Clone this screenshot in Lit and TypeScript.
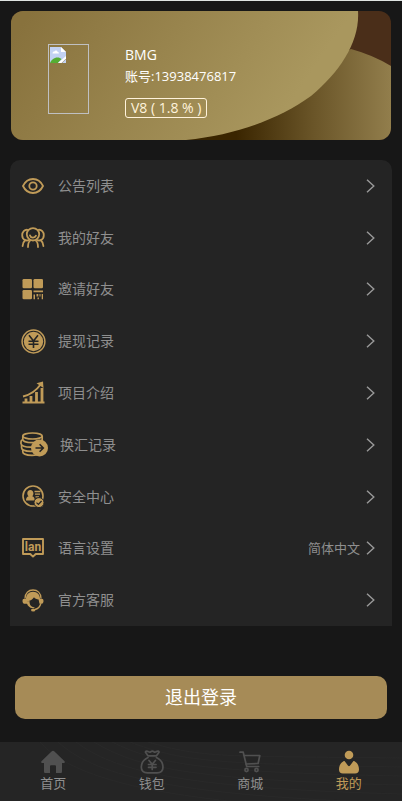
import { LitElement, html, css, svg, TemplateResult } from "lit";
import { customElement } from "lit/decorators.js";
import { classMap } from "lit/directives/class-map.js";

interface MenuEntry {
  label: string;
  icon: TemplateResult;
  value?: string;
}

interface TabEntry {
  label: string;
  icon: TemplateResult;
  active?: boolean;
}

const eyeIcon = html`<svg width="22" height="16" viewBox="0 0 22 16" fill="none" stroke="currentColor" stroke-width="1.8">
  <path d="M1 8C3.200 3.400 6.800 1 11 1s7.800 2.400 10 7c-2.200 4.600-5.800 7-10 7S3.200 12.600 1 8z" />
  <circle cx="11" cy="8" r="3.700" />
</svg>`;

const friendsIcon = html`<svg width="24" height="21" viewBox="0 0 24 21" fill="none" stroke="currentColor" stroke-width="1.8" stroke-linecap="round">
  <circle cx="12" cy="7.300" r="6.200" />
  <path d="M9 8.500c.6 2.600 4.800 2.900 6 .2" />
  <path d="M6.500 2.800C3.500 2.500 1.200 5 1.200 8.200c0 2.300 1.200 4.200 3 5C2.500 14.600 1.700 16.500 1.600 19" />
  <path d="M17.500 2.800c3-.3 5.300 2.200 5.300 5.400 0 2.300-1.200 4.200-3 5 1.700 1.400 2.500 3.300 2.600 5.800" />
  <path d="M4.200 13.200c1.200.4 2.600.4 3.800-.2M19.800 13.200c-1.200.4-2.600.4-3.800-.2" />
  <path d="M9.200 13.600C7.600 14.800 7 17 7 20M14.800 13.600c1.600 1.200 2.200 3.400 2.200 6.400" />
</svg>`;

const codeIcon = html`<svg width="22" height="21" viewBox="0 0 22 21" fill="currentColor">
  <rect x="0.500" y="0" width="9.500" height="9.300" rx="1.300" />
  <rect x="11.500" y="0" width="9.500" height="9.300" rx="1.300" />
  <rect x="0.500" y="11" width="9.500" height="9.300" rx="1.300" />
  <path d="M11.500 11.500H21v1.700h-9.500zM11.500 15.500h1.500v4.800h-1.500zM14.500 15h1.800v2.500h-1.800zM15.500 18.500h1.400v1.800h-1.400zM17.500 15h1v2.500h-1zM19.700 15H21v5.300h-1.300z" />
</svg>`;

const yenIcon = html`<svg width="25" height="25" viewBox="0 0 25 25" fill="none">
  <circle cx="12.500" cy="12.500" r="11.400" stroke="currentColor" stroke-width="1.500" />
  <circle cx="12.500" cy="12.500" r="9.700" fill="currentColor" />
  <path d="M8 6.200l4.500 5.800L17 6.200M12.500 12v7M7.500 12.300h10M7.500 15.300h10" stroke="#242424" stroke-width="1.600" />
</svg>`;

const chartIcon = html`<svg width="23" height="23" viewBox="0 0 23 23" fill="none" stroke="currentColor">
  <path d="M0.500 21.500h22" stroke-width="2" />
  <path d="M4 21v-3.500M9 21v-6M14.500 21V11M20 21V7" stroke-width="2.800" />
  <path d="M1 15.500C7.500 14 14 10 19 3" stroke-width="1.900" />
  <path d="M14.500 2.200L21 .5l.5 6.500z" fill="currentColor" stroke="none" />
</svg>`;

const coinsIcon = html`<svg width="28" height="25" viewBox="0 0 28 25" fill="none" stroke="currentColor" stroke-width="1.700">
  <ellipse cx="12.500" cy="4" rx="9.700" ry="3" />
  <path d="M2.800 4v3.500c0 1.800 4 3.200 9.700 3.200s9.700-1.400 9.700-3.200V4" />
  <path d="M2.800 7.500C1.500 8 1 8.800 1 9.800v2c0 1.900 4.200 3.400 9.500 3.400 2.200 0 4-.2 5.500-.6" />
  <path d="M1.600 13v3c0 1.900 4 3.300 9.400 3.300 1.700 0 3.200-.1 4.500-.4" />
  <path d="M2.800 18v2c0 1.900 4 3.300 9.200 3.300 1.900 0 3.600-.2 5-.6" />
  <circle cx="19.500" cy="16" r="8.500" fill="currentColor" stroke="none" />
  <path d="M15.500 16h7.500M19.600 12.300l3.700 3.700-3.700 3.700" stroke="#242424" stroke-width="1.600" />
</svg>`;

const safetyIcon = html`<svg width="22" height="23" viewBox="0 0 22 23" fill="none">
  <circle cx="11" cy="11" r="10" stroke="currentColor" stroke-width="1.600" />
  <path d="M8.300 5c1.900 0 3.100 1.300 3.100 3.200 0 1.300-.5 2.300-1.200 3 1.800.7 2.600 1.700 2.600 4.300H4c0-2.600.8-3.600 2.600-4.300-.7-.7-1.300-1.700-1.300-3C5.300 6.300 6.400 5 8.300 5z" fill="currentColor" />
  <path d="M12.500 6.500h6M13 9.200h5M13.500 11.800h3.500" stroke="currentColor" stroke-width="1.300" />
  <circle cx="17" cy="17.600" r="5" fill="currentColor" stroke="#242424" stroke-width="1" />
  <path d="M14.500 17.600l1.900 1.800 3.200-3.400" stroke="#242424" stroke-width="1.300" />
</svg>`;

const languageIcon = html`<svg width="22" height="20" viewBox="0 0 22 20" fill="none">
  <path d="M1 1h20v15h-7.300L11 18.600 8.300 16H1z" stroke="currentColor" stroke-width="1.900" stroke-linejoin="round" />
  <text class="icon-text" x="11" y="13" text-anchor="middle" fill="currentColor">lan</text>
</svg>`;

const supportIcon = html`<svg width="22" height="23" viewBox="0 0 22 23" fill="none">
  <path d="M3 9.500C3 4 6.500 1 11 1s8 3 8 8.500" stroke="currentColor" stroke-width="1.300" />
  <path d="M11 2.800c4.300 0 7 2.900 7 7h1.800c1.100 0 1.700.8 1.700 2.200s-.6 2.700-1.700 2.700h-2.300l-.9-4.200c-2-.2-3.500-1-4.600-2.300-1.500 2.200-3.600 3.500-6.600 4.200l.8 2.300H2.200C1.100 14.700.5 13.400.5 12s.6-2.200 1.700-2.200H4c0-4.100 2.700-7 7-7z" fill="currentColor" />
  <path d="M4.500 12.500c.6 4.200 3 6.600 6.300 6.600.8 0 1.500-.1 2.200-.4-1.200-.9-3-.4-4.200-1.900-1-1.300-1.300-3-1.300-4.800z" fill="currentColor" />
  <path d="M18.800 14.500c-.7 3.300-2.600 5.300-6 6" stroke="currentColor" stroke-width="1.300" />
  <ellipse cx="11.200" cy="20.900" rx="2.200" ry="1.500" fill="currentColor" />
</svg>`;

const homeIcon = html`<svg width="24" height="24" viewBox="0 0 24 24" fill="currentColor">
  <path d="M12 .8c.4 0 .8.200 1.200.5L23.300 11c.9.900.5 2-.6 2H21v8.500c0 1-.6 1.500-1.500 1.500H15v-6.500c0-.9-.5-1.300-1.300-1.300h-3.400c-.8 0-1.300.4-1.300 1.300V23H4.500C3.600 23 3 22.500 3 21.500V13H1.300c-1.100 0-1.500-1.100-.6-2L10.800 1.300c.4-.3.8-.5 1.200-.5z" />
</svg>`;

const walletIcon = html`<svg width="24" height="24" viewBox="0 0 24 24" fill="none" stroke="currentColor" stroke-width="1.700" stroke-linecap="round" stroke-linejoin="round">
  <path d="M8 5.800L5.600 2.600C5.200 1.800 5.600 1.200 6.500 1.200c1.800 0 2.200.9 3.200.9s1.300-.9 2.600-.9 1.700.9 2.700.9 1.400-.9 3-.9c.9 0 1.300.6.9 1.400L16.500 5.800z" />
  <path d="M8 7.500C4 9.500 1.300 13 1.300 17c0 4 2.500 5.800 6.200 5.800h9.500c3.700 0 6-1.800 6-5.800 0-4-2.600-7.500-6.500-9.500" />
  <path d="M9 10.500l3.200 3.800 3.200-3.800M12.200 14.300v5.200M8.500 14.500h7.500M8.500 17.300h7.500" />
</svg>`;

const cartIcon = html`<svg width="24" height="24" viewBox="0 0 24 24" fill="none" stroke="currentColor" stroke-width="1.700" stroke-linecap="round" stroke-linejoin="round">
  <path d="M2 2.200h3.200l3.500 14.300h12" />
  <path d="M6.200 5.500h15.600l-1.700 8-12.200.5" />
  <circle cx="8.500" cy="20" r="1.600" />
  <circle cx="18.500" cy="20" r="1.600" />
</svg>`;

const personIcon = html`<svg width="24" height="24" viewBox="0 0 24 24" fill="currentColor">
  <circle cx="12" cy="5" r="4.300" />
  <path d="M6.500 11.200c.5-.3 1-.2 1.400.3l3.200 4.200c.5.600 1.300.600 1.800 0l3.200-4.200c.4-.5.900-.6 1.400-.3 3 1.500 4.500 4.800 4.500 8.300 0 2.600-1.400 4-4 4H6c-2.600 0-4-1.400-4-4 0-3.500 1.500-6.800 4.500-8.300z" />
</svg>`;

const chevron = html`<svg class="chevron" width="9" height="14" viewBox="0 0 9 14" fill="none" stroke="currentColor" stroke-width="1.400">
  <path d="M1 .8L7.800 7 1 13.200" />
</svg>`;

const menu: MenuEntry[] = [
  { label: "公告列表", icon: eyeIcon },
  { label: "我的好友", icon: friendsIcon },
  { label: "邀请好友", icon: codeIcon },
  { label: "提现记录", icon: yenIcon },
  { label: "项目介绍", icon: chartIcon },
  { label: "换汇记录", icon: coinsIcon },
  { label: "安全中心", icon: safetyIcon },
  { label: "语言设置", icon: languageIcon, value: "简体中文" },
  { label: "官方客服", icon: supportIcon },
];

const tabs: TabEntry[] = [
  { label: "首页", icon: homeIcon },
  { label: "钱包", icon: walletIcon },
  { label: "商城", icon: cartIcon },
  { label: "我的", icon: personIcon, active: true },
];

@customElement("profile-card")
export class ProfileCard extends LitElement {
  static styles = css`
    :host {
      display: block;
    }
    .card {
      position: relative;
      display: flex;
      align-items: flex-start;
      gap: 36px;
      padding: 33px 37px 22px;
      border-radius: 12px;
      overflow: hidden;
      color: #fff;
    }
    .art {
      position: absolute;
      inset: 0;
      width: 100%;
      height: 100%;
    }
    .avatar {
      position: relative;
      box-sizing: border-box;
      width: 41px;
      height: 70px;
      border: 1px solid #bfc0c2;
      padding: 1px;
    }
    .info {
      position: relative;
      display: flex;
      flex-direction: column;
      align-items: flex-start;
      min-height: 74px;
    }
    .name {
      font-size: 14px;
      line-height: 22px;
    }
    .account {
      font-size: 13px;
      line-height: 20px;
    }
    .level {
      box-sizing: border-box;
      margin-top: 12px;
      padding: 0 5px;
      border: 1px solid #fff3dc;
      border-radius: 3px;
      color: #fff3dc;
      font-size: 14px;
      line-height: 18px;
      white-space: nowrap;
    }
  `;

  render() {
    return html`
      <section class="card">
        <svg class="art" viewBox="0 0 380 129" preserveAspectRatio="none" aria-hidden="true">
          <defs>
            <linearGradient id="gold" gradientUnits="userSpaceOnUse" x1="20" y1="0" x2="240" y2="150">
              <stop offset="0" stop-color="#88723d" />
              <stop offset="1" stop-color="#a9975e" />
            </linearGradient>
            <linearGradient id="shade" gradientUnits="userSpaceOnUse" x1="225" y1="0" x2="380" y2="0">
              <stop offset="0" stop-color="#3a2500" />
              <stop offset="0.500" stop-color="#6a5528" />
              <stop offset="1" stop-color="#927e4c" />
            </linearGradient>
          </defs>
          <rect width="380" height="129" fill="#4a2e19" />
          <path d="M150 129L340 38Q362 44 380 55V129z" fill="url(#shade)" />
          <path d="M0 0H347C349 30 330 60 300 85C268 108 225 124 175 129H0z" fill="url(#gold)" />
        </svg>
        <div class="avatar">
          <svg width="16" height="16" viewBox="0 0 16 16" role="img" aria-label="头像">
            <path d="M0 0h11l5 5v6l-5 5H0z" fill="#c3d2f3" />
            <path d="M11 0v5h5z" fill="#fff" />
            <path d="M2.500 6.500c0-1.500 1-2 1.800-1.900C5 3 7.400 3.200 7.600 5c1 0 1.400.6 1.300 1.500z" fill="#fff" />
            <path d="M0 16c1-3 4-5.500 7.500-5.500 1.700 0 3 .6 4 1.600L8 16z" fill="#55ad33" />
            <path d="M8 16l8-7v2.500L11.500 16z" fill="#fff" />
            <path d="M12 16l4-4v4z" fill="#c3d2f3" />
          </svg>
        </div>
        <div class="info">
          <span class="name">BMG</span>
          <span class="account">账号:13938476817</span>
          <span class="level">V8 ( 1.8 % )</span>
        </div>
      </section>
    `;
  }
}

@customElement("app-root")
export class AppRoot extends LitElement {
  static styles = css`
    :host {
      display: flex;
      flex-direction: column;
      box-sizing: border-box;
      min-height: 100vh;
      border-top: 1px solid #dfe4e2;
      background: #171717;
      color: #8f8f8f;
      font-family: "Open Sans", "Noto Sans CJK SC", sans-serif;
    }
    a {
      color: inherit;
      text-decoration: none;
    }
    .profile {
      margin: 10px 11px 20px;
    }
    .menu {
      display: grid;
      grid-auto-rows: 1fr;
      min-height: 466px;
      margin: 0 10px;
      border-radius: 10px 10px 0 0;
      background: #242424;
    }
    .row {
      display: flex;
      align-items: center;
      gap: 12px;
      padding: 0 17px 0 10px;
      font-size: 14px;
      line-height: 20px;
    }
    .icon {
      display: flex;
      justify-content: center;
      min-width: 26px;
      color: #c09b58;
    }
    .icon-text {
      font: bold 12px Roboto, sans-serif;
    }
    .label {
      flex: 1;
    }
    .end {
      display: flex;
      align-items: center;
      gap: 6px;
      font-size: 13px;
    }
    .chevron {
      color: #9a9a9a;
    }
    .logout {
      margin: 50px 15px 23px;
      padding: 8px;
      border: 0;
      border-radius: 10px;
      background: #a68b57;
      color: #fff;
      font-family: inherit;
      font-size: 18px;
      line-height: 27px;
    }
    .tabs {
      position: relative;
      display: flex;
      margin-top: auto;
      padding: 8px 4px 9px;
      background: #252525;
    }
    .waves {
      position: absolute;
      inset: 0;
      width: 100%;
      height: 100%;
    }
    .tab {
      position: relative;
      flex: 1;
      display: flex;
      flex-direction: column;
      align-items: center;
      color: #8f8f8f;
      font-size: 13px;
      line-height: 18px;
    }
    .tab svg {
      color: #505050;
    }
    .tab.active,
    .tab.active svg {
      color: #c09b58;
    }
  `;

  render() {
    return html`
      <profile-card class="profile"></profile-card>
      <nav class="menu">
        ${menu.map(
          (entry) => html`
            <a class="row" href="#">
              <span class="icon">${entry.icon}</span>
              <span class="label">${entry.label}</span>
              <span class="end">${entry.value ?? ""}${chevron}</span>
            </a>
          `
        )}
      </nav>
      <button class="logout" type="button">退出登录</button>
      <nav class="tabs">
        <svg class="waves" viewBox="0 0 402 59" preserveAspectRatio="none" fill="none" stroke="#292929" aria-hidden="true">
          ${[0, 1, 2, 3, 4, 5, 6].map(
            (i) => svg`<path d=${`M${40 + i * 18} 0C${70 + i * 22} ${34 - i * 3} ${150 + i * 12} ${62 - i * 8} 402 ${70 - i * 9}`} />`
          )}
        </svg>
        ${tabs.map(
          (tab) => html`
            <a class=${classMap({ tab: true, active: !!tab.active })} href="#">
              ${tab.icon}
              <span>${tab.label}</span>
            </a>
          `
        )}
      </nav>
    `;
  }
}
